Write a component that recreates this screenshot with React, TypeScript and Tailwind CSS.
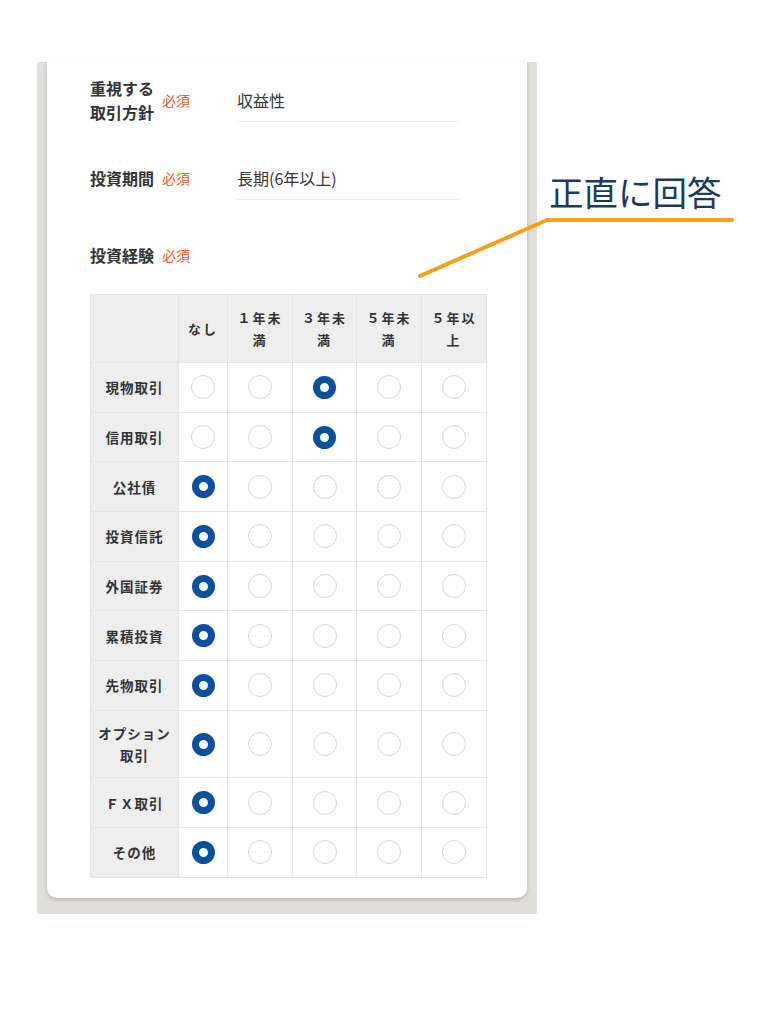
import React from 'react';

const font = { fontFamily: '"Noto Sans CJK JP", "Noto Sans", sans-serif' };

const columns = ['なし', '１年未\n満', '３年未\n満', '５年未\n満', '５年以\n上'];
const colWidths = ['w-[49px]', 'w-[65px]', 'w-[64px]', 'w-[65px]', 'w-[65px]'];

const rows: { label: string; selected: number; tall?: boolean }[] = [
  { label: '現物取引', selected: 2 },
  { label: '信用取引', selected: 2 },
  { label: '公社債', selected: 0 },
  { label: '投資信託', selected: 0 },
  { label: '外国証券', selected: 0 },
  { label: '累積投資', selected: 0 },
  { label: '先物取引', selected: 0 },
  { label: 'オプション\n取引', selected: 0, tall: true },
  { label: 'ＦＸ取引', selected: 0 },
  { label: 'その他', selected: 0 },
];

function Radio({ checked }: { checked: boolean }) {
  return checked ? (
    <span className="mx-auto block h-[23px] w-[23px] rounded-full border-[7px] border-[#0a509e] bg-white" />
  ) : (
    <span className="mx-auto block h-[24px] w-[24px] rounded-full border-[1.5px] border-[#d6d6d6] bg-white" />
  );
}

function Required() {
  return <span className="text-[14px] text-[#f0582a]">必須</span>;
}

function FormRow({ label, value, className }: { label: React.ReactNode; value?: string; className?: string }) {
  return (
    <div className={`flex items-center ${className ?? ''}`}>
      <div className="flex w-[147px] items-center gap-[8px]">
        <div className="text-[16px] font-bold leading-[24px] text-[#333]">{label}</div>
        <Required />
      </div>
      {value !== undefined ? (
        <div className="flex h-[44px] w-[222px] items-center border-b border-[#ececec] text-[16px] text-[#333]">
          {value}
        </div>
      ) : (
        <div className="h-[44px]" />
      )}
    </div>
  );
}

export default function App() {
  return (
    <div className="relative h-[1024px] w-[780px] bg-white pt-[62px]" style={font}>
      <div className="ml-[37px] w-[500px] bg-[#e2ded8] px-[10px] pb-[16px]">
        <div className="rounded-b-[10px] bg-white pl-[43px] pt-[14px] pb-[20px] shadow-[0_2px_4px_rgba(0,0,0,0.18)]">
          <FormRow
            label={
              <>
                重視する
                <br />
                取引方針
              </>
            }
            value="収益性"
          />
          <FormRow className="mt-[32px]" label="投資期間" value="長期(6年以上)" />
          <FormRow className="mt-[33px]" label="投資経験" />

          <table className="mt-[17px] w-[396px] table-fixed border-collapse text-[#333]">
            <colgroup>
              <col className="w-[88px]" />
              {colWidths.map((w, i) => (
                <col key={i} className={w} />
              ))}
            </colgroup>
            <thead>
              <tr className="h-[68px] bg-[#eeeeee]">
                <th className="border border-[#e4e4e4]" />
                {columns.map((c) => (
                  <th
                    key={c}
                    className="whitespace-pre-line border border-[#e4e4e4] text-center text-[13px] font-bold leading-[22px] tracking-[2px]"
                  >
                    {c}
                  </th>
                ))}
              </tr>
            </thead>
            <tbody>
              {rows.map((r) => (
                <tr key={r.label} className={r.tall ? 'h-[67.5px]' : 'h-[49.7px]'}>
                  <th className="whitespace-pre-line border border-[#e4e4e4] bg-[#eeeeee] text-center text-[13.5px] font-bold leading-[22px] tracking-[1px]">
                    {r.label}
                  </th>
                  {columns.map((c, i) => (
                    <td key={c} className="border border-[#e4e4e4] bg-white">
                      <Radio checked={r.selected === i} />
                    </td>
                  ))}
                </tr>
              ))}
            </tbody>
          </table>
        </div>
      </div>

      <div className="absolute left-[549px] top-[174px] text-[34.5px] leading-none text-[#1c3a5e]">正直に回答</div>
      <svg className="pointer-events-none absolute left-0 top-0" width="780" height="1024">
        <polyline
          points="420,276 547,220 732,220"
          fill="none"
          stroke="#f4a21c"
          strokeWidth="4"
          strokeLinecap="round"
          strokeLinejoin="round"
        />
      </svg>
    </div>
  );
}
